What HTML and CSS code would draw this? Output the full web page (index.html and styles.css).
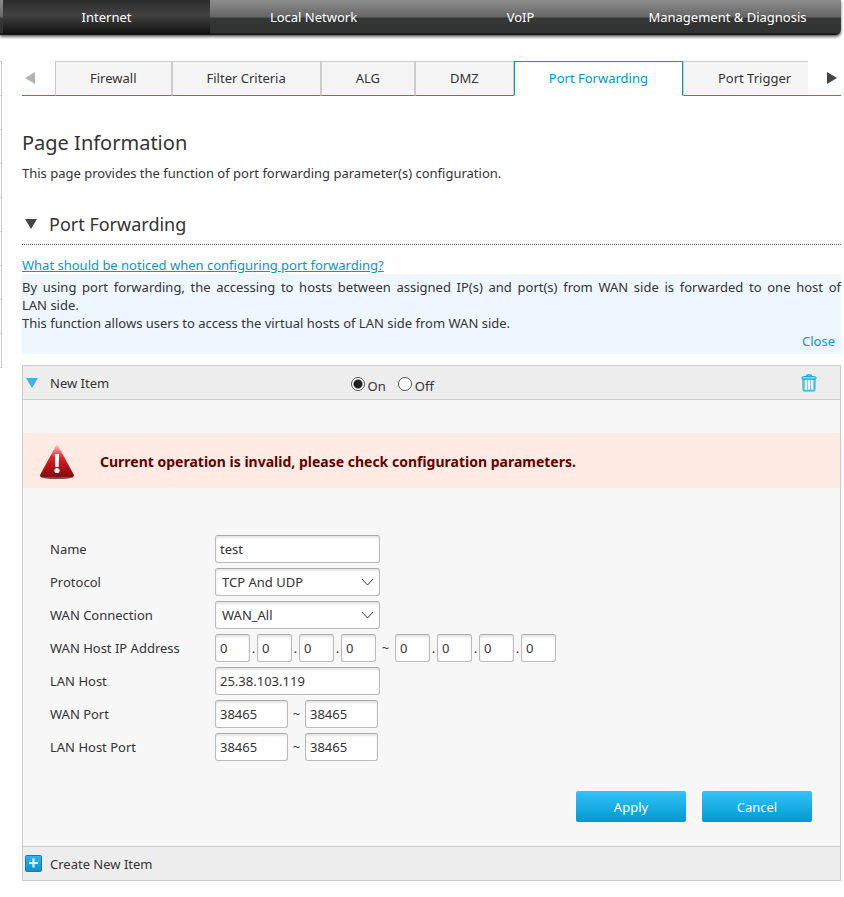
FILE: index.html
```html
<!DOCTYPE html>
<html lang="en">
<head>
    <meta charset="UTF-8">
    <meta name="viewport" content="width=device-width, initial-scale=1.0">
    <title>Port Forwarding</title>
    <link rel="stylesheet" href="styles.css">
</head>
<body>
    <nav class="main-nav">
        <a href="#" class="active">Internet</a>
        <a href="#">Local Network</a>
        <a href="#">VoIP</a>
        <a href="#">Management &amp; Diagnosis</a>
    </nav>

    <div class="page">
        <ul class="side-menu">
            <li></li>
            <li></li>
            <li></li>
            <li></li>
            <li></li>
            <li></li>
            <li></li>
            <li></li>
            <li></li>
        </ul>

        <main class="content">
            <div class="tab-bar">
                <button type="button" class="tab-arrow" aria-label="Previous tabs">
                    <svg width="10" height="12" viewBox="0 0 10 12"><path d="M10 0v12L0 6z" fill="#b3b3b3"/></svg>
                </button>
                <div class="tabs">
                    <a href="#">Firewall</a>
                    <a href="#">Filter Criteria</a>
                    <a href="#">ALG</a>
                    <a href="#">DMZ</a>
                    <a href="#" class="active">Port Forwarding</a>
                    <a href="#">Port Trigger</a>
                </div>
                <button type="button" class="tab-arrow next" aria-label="Next tabs">
                    <svg width="10" height="12" viewBox="0 0 10 12"><path d="M0 0v12l10-6z" fill="#444"/></svg>
                </button>
            </div>

            <h1>Page Information</h1>
            <p class="intro">This page provides the function of port forwarding parameter(s) configuration.</p>

            <h2>
                <svg width="12" height="10" viewBox="0 0 12 10"><path d="M0 0h12L6 10z" fill="#444"/></svg>
                Port Forwarding
            </h2>

            <a href="#" class="help-link">What should be noticed when configuring port forwarding?</a>
            <div class="help">
                <p>By using port forwarding, the accessing to hosts between assigned IP(s) and port(s) from WAN side is forwarded to one host of LAN&nbsp;side.</p>
                <p>This function allows users to access the virtual hosts of LAN side from WAN side.</p>
                <a href="#" class="close">Close</a>
            </div>

            <form class="item">
                <div class="item-header">
                    <svg class="marker" width="12" height="10" viewBox="0 0 12 10"><path d="M0 0h12L6 10z" fill="#35b5e8"/></svg>
                    <span class="item-title">New Item</span>
                    <div class="switch">
                        <label><input type="radio" name="enable" checked>On</label>
                        <label><input type="radio" name="enable">Off</label>
                    </div>
                    <button type="button" class="delete" aria-label="Delete">
                        <svg width="16" height="18" viewBox="0 0 16 18">
                            <path d="M2 5h12v10.500a1.500 1.500 0 0 1-1.500 1.500h-9A1.500 1.500 0 0 1 2 15.500z" fill="#7ccdec" stroke="#1fa9dc"/>
                            <path d="M5 6v9.500M8 6v9.500M11 6v9.500" stroke="#fff" stroke-width="1.600"/>
                            <path d="M1 5V3.500Q1 2.500 2.500 2.500h11Q15 2.500 15 3.500V5z" fill="#8fd8f2" stroke="#1fa9dc"/>
                            <path d="M5.500 2.500Q5.500 1 7 1h2q1.500 0 1.500 1.500" fill="none" stroke="#1fa9dc" stroke-width="1.500"/>
                        </svg>
                    </button>
                </div>

                <div class="alert">
                    <svg width="36" height="36" viewBox="0 0 36 36">
                        <defs>
                            <linearGradient id="red" x1="0" y1="0" x2="0" y2="1">
                                <stop offset="0" stop-color="#f7a9a9"/>
                                <stop offset="0.350" stop-color="#e0282d"/>
                                <stop offset="0.600" stop-color="#bd1519"/>
                                <stop offset="1" stop-color="#8a0d0f"/>
                            </linearGradient>
                        </defs>
                        <ellipse cx="18" cy="33" rx="16" ry="2" fill="#6b5552"/>
                        <path d="M18 3L33.500 31.500h-31z" fill="url(#red)" stroke="url(#red)" stroke-width="3" stroke-linejoin="round"/>
                        <path d="M15.800 10h4.400l-.6 13h-3.200z" fill="#fff"/>
                        <circle cx="18" cy="26.500" r="2.600" fill="#fff"/>
                    </svg>
                    <strong>Current operation is invalid, please check configuration parameters.</strong>
                </div>

                <div class="fields">
                    <label for="name">Name</label>
                    <div><input type="text" id="name" value="test"></div>

                    <label for="protocol">Protocol</label>
                    <div><select id="protocol"><option>TCP And UDP</option></select></div>

                    <label for="wan">WAN Connection</label>
                    <div><select id="wan"><option>WAN_All</option></select></div>

                    <label for="ip">WAN Host IP Address</label>
                    <div class="ip">
                        <input type="text" id="ip" value="0"><span>.</span>
                        <input type="text" aria-label="Start address part 2" value="0"><span>.</span>
                        <input type="text" aria-label="Start address part 3" value="0"><span>.</span>
                        <input type="text" aria-label="Start address part 4" value="0"><span class="to">~</span>
                        <input type="text" aria-label="End address part 1" value="0"><span>.</span>
                        <input type="text" aria-label="End address part 2" value="0"><span>.</span>
                        <input type="text" aria-label="End address part 3" value="0"><span>.</span>
                        <input type="text" aria-label="End address part 4" value="0">
                    </div>

                    <label for="lanHost">LAN Host</label>
                    <div><input type="text" id="lanHost" value="25.38.103.119"></div>

                    <label for="wanPort">WAN Port</label>
                    <div class="ports">
                        <input type="text" id="wanPort" value="38465"><span class="to">~</span>
                        <input type="text" aria-label="WAN port end" value="38465">
                    </div>

                    <label for="lanPort">LAN Host Port</label>
                    <div class="ports">
                        <input type="text" id="lanPort" value="38465"><span class="to">~</span>
                        <input type="text" aria-label="LAN host port end" value="38465">
                    </div>
                </div>

                <div class="actions">
                    <button type="submit">Apply</button>
                    <button type="reset">Cancel</button>
                </div>

                <button type="button" class="create">
                    <svg width="17" height="17" viewBox="0 0 17 17">
                        <defs>
                            <linearGradient id="blue" x1="0" y1="0" x2="0" y2="1">
                                <stop offset="0" stop-color="#2bb8ee"/>
                                <stop offset="1" stop-color="#0a92c8"/>
                            </linearGradient>
                        </defs>
                        <rect x=".5" y=".5" width="16" height="16" rx="1" fill="url(#blue)" stroke="#2478a8"/>
                        <path d="M8.500 3.500v9M4 8h9" stroke="#fff" stroke-width="2"/>
                    </svg>
                    Create New Item
                </button>
            </form>
        </main>
    </div>
</body>
</html>
```

FILE: styles.css
```css
* {
    margin: 0;
    padding: 0;
    box-sizing: border-box;
}

body {
    background-color: #fff;
    color: #333;
    font-family: 'Noto Sans', 'Open Sans', sans-serif;
    font-size: 13px;
    line-height: 18px;
}

a {
    color: #0099cc;
    text-decoration: none;
}

button,
input,
select {
    font: inherit;
    color: inherit;
}

button {
    border: none;
    background: none;
    cursor: pointer;
}

/* top menu */
.main-nav {
    display: flex;
    height: 35px;
    margin-right: 3px;
    padding: 0 10px 0 3px;
    background: linear-gradient(#8e8e8e 0, #646464 17px, #363838 18px, #303232 33px, #111 34px);
    border-bottom-right-radius: 5px;
    box-shadow: 0 2px 3px rgba(0, 0, 0, 0.6);
}

.main-nav a {
    flex: 1;
    color: #fff;
    line-height: 34px;
    text-align: center;
}

.main-nav a.active {
    background: linear-gradient(#2b2b2b 0, #424242 15px, #111 34px);
}

.page {
    display: flex;
    align-items: flex-start;
    gap: 20px;
    padding: 26px 3px 16px 0;
}

.side-menu {
    width: 2px;
    list-style: none;
    border-top: 1px solid #ccc;
    border-right: 1px solid #ccc;
}

.side-menu li {
    height: 34px;
    border-bottom: 1px solid #ccc;
}

.content {
    flex: 1;
    min-width: 0;
}

/* tabs */
.tab-bar {
    display: flex;
    height: 35px;
    border-bottom: 1px solid #0099cc;
}

.tab-arrow {
    flex: none;
    width: 33px;
    padding-right: 18px;
    line-height: 0;
}

.tab-arrow.next {
    padding: 0 0 0 14px;
}

.tabs {
    display: flex;
    flex: 1;
    height: 35px;
    overflow: hidden;
}

.tabs a {
    flex: none;
    padding: 0 34px;
    line-height: 33px;
    color: #333;
    white-space: nowrap;
    background-color: #f5f5f5;
    border: 1px solid #ccc;
    border-bottom-color: #0099cc;
}

.tabs a.active {
    color: #0099cc;
    background-color: #fff;
    border-color: #0099cc;
    border-bottom-color: #fff;
}

h1,
h2 {
    font-weight: normal;
    line-height: 28px;
}

h1 {
    margin-top: 33px;
    font-size: 20px;
}

.intro {
    margin-top: 7px;
}

h2 {
    display: flex;
    align-items: center;
    gap: 12px;
    margin-top: 28px;
    padding: 0 0 6px 3px;
    font-size: 18px;
    border-bottom: 1px dotted #666;
}

.help-link {
    display: block;
    margin-top: 11px;
    text-decoration: underline;
}

.help {
    padding: 4px 0;
    background-color: #eef7ff;
}

.help p {
    text-align: justify;
}

.help .close {
    display: block;
    padding-right: 6px;
    text-align: right;
}

/* item panel */
.item {
    margin-top: 11px;
    background-color: #f7f7f7;
    border: 1px solid #ccc;
}

.item-header {
    display: flex;
    align-items: center;
    height: 34px;
    padding: 0 23px 0 3px;
    background-color: #ededed;
    border-bottom: 1px solid #ccc;
}

.item-title {
    width: 38%;
    margin-left: 12px;
}

.switch {
    display: flex;
    flex: 1;
    gap: 12px;
    padding-top: 6px;
}

.switch label {
    display: flex;
    align-items: center;
    gap: 3px;
}

.switch input {
    appearance: none;
    width: 14px;
    height: 14px;
    margin-bottom: 4px;
    background-color: #fff;
    border: 1px solid #555;
    border-radius: 50%;
}

.switch input:checked {
    background: radial-gradient(circle, #222 4px, #fff 5px);
}

.delete {
    height: 18px;
    line-height: 0;
}

.alert {
    display: flex;
    align-items: center;
    gap: 25px;
    height: 55px;
    margin-top: 33px;
    padding: 2px 16px 0;
    font-size: 14px;
    background-color: #ffebe4;
    color: #660000;
}

.alert svg {
    flex: none;
}

.fields {
    display: grid;
    grid-template-columns: 165px 1fr;
    row-gap: 5px;
    align-items: center;
    margin-top: 47px;
    padding-left: 27px;
}

.fields div {
    display: flex;
    align-items: center;
}

.fields input,
.fields select {
    width: 165px;
    height: 28px;
    padding: 0 4px;
    background-color: #fff;
    border: 1px solid #bbb;
    border-top-color: #aaa;
    border-radius: 3px;
    box-shadow: inset 0 2px 2px #e5e5e5;
}

.fields select {
    appearance: none;
    padding: 0 6px;
    background-image: url("data:image/svg+xml,%3Csvg xmlns='http://www.w3.org/2000/svg' width='13' height='8'%3E%3Cpath d='M1 1l5.5 6 5.5-6' fill='none' stroke='%23333'/%3E%3C/svg%3E");
    background-repeat: no-repeat;
    background-position: right 5px center;
}

.fields span {
    width: 7px;
    text-align: center;
}

.fields .to {
    width: 17px;
}

.fields .ip .to {
    width: 19px;
}

.fields .ip input {
    width: 35px;
}

.fields .ports input {
    width: 73px;
}

.actions {
    display: flex;
    justify-content: flex-end;
    gap: 16px;
    padding: 30px 28px 24px;
}

.actions button {
    width: 110px;
    height: 31px;
    color: #fff;
    background: linear-gradient(#35c3f8, #0099cf);
    border-radius: 2px;
}

.create {
    display: flex;
    align-items: center;
    gap: 8px;
    width: 100%;
    height: 34px;
    padding-left: 2px;
    background-color: #ededed;
    border-top: 1px solid #ccc;
}
```
